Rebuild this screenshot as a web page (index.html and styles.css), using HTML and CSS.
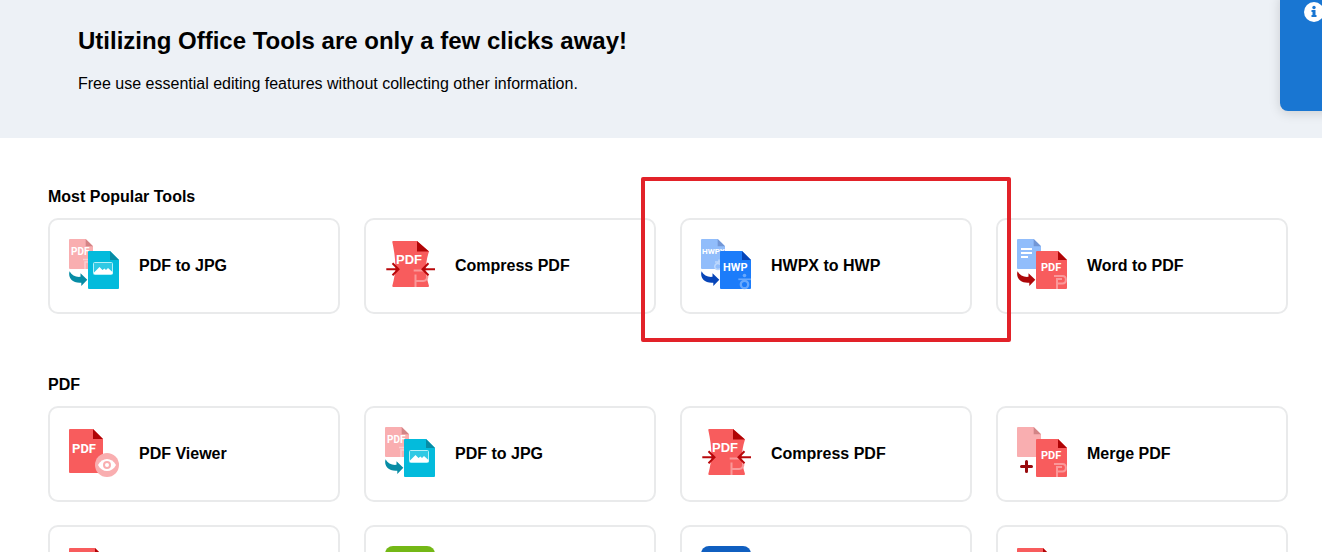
FILE: index.html
```html
<!DOCTYPE html>
<html lang="en">
<head>
  <meta charset="UTF-8" />
  <meta name="viewport" content="width=device-width, initial-scale=1" />
  <link rel="stylesheet" href="styles.css">
</head>
<body>
  <!-- shared icon parts -->
  <svg class="sprite" aria-hidden="true">
    <symbol id="back-doc" viewBox="0 0 56 56">
      <path d="M4 1h15.700l7.300 7.300V31H4a1 1 0 0 1-1-1V2a1 1 0 0 1 1-1z" />
    </symbol>
    <symbol id="front-doc" viewBox="0 0 56 56">
      <path d="M23 13h21l9 9v28a1 1 0 0 1-1 1H23a1 1 0 0 1-1-1V14a1 1 0 0 1 1-1z" />
    </symbol>
    <symbol id="arrow" viewBox="0 0 56 56">
      <path d="M3.500 33.300c2.500 4 6 6 11 5.500V35.300L21.300 41.800 15.300 48v-3.300C8 45.500 1.500 41 3.500 33.300z" />
    </symbol>
    <symbol id="jpg-front" viewBox="0 0 56 56">
      <use href="#front-doc" fill="#03bbdc" />
      <path d="M44 13v9h9z" fill="#078ca5" />
      <rect x="27.500" y="24.500" width="19" height="12" rx="1" fill="#2fc9e4" stroke="#b5f0f8" />
      <path d="M28 34.500l5.500-5.500 3 3 2-1.500 1.500 1.500 2-2 4.500 4V36H28z" fill="#fff" />
      <use href="#arrow" fill="#078ca5" />
    </symbol>
    <symbol id="compress-doc" viewBox="0 0 56 56">
      <path d="M11 3h24l12 10.500c-4 12-4 22 0 34.500a1 1 0 0 1-1 1H11.300a1 1 0 0 1-1-1c4-15 4-25 0-44a1 1 0 0 1 .7-1z" fill="#f85c5d" />
      <path d="M35 3v10.500h12z" fill="#af0406" />
      <path d="M31.700 32.500H44M33.500 49V36.500M34 43h7c4 0 4.500-3 4.500-6" fill="none" stroke="#fa9899" stroke-width="2" />
      <path d="M4.300 31.300H16M10.500 25.300l6 6-6 6M53 31.300H41M46.500 25.300l-6 6 6 6" fill="none" stroke="#b8080b" stroke-width="2" />
    </symbol>
    <symbol id="pdf-front" viewBox="0 0 56 56">
      <use href="#front-doc" fill="#f85c5d" />
      <path d="M44 13v9h9z" fill="#af0406" />
      <path d="M40 38h8.500c4.500 0 4.500 7.500 0 7.500H43M43 51V41h5" fill="none" stroke="#fa9899" stroke-width="2" />
    </symbol>
    <symbol id="hwp-front" viewBox="0 0 56 56">
      <use href="#front-doc" fill="#1c7cfa" />
      <path d="M44 13v9h9z" fill="#0745b8" />
      <circle cx="46.500" cy="37.500" r="1.800" fill="#68a8fc" />
      <path d="M40.300 41.300H53" stroke="#68a8fc" stroke-width="1.700" />
      <circle cx="46.500" cy="46.500" r="3.700" fill="none" stroke="#68a8fc" stroke-width="2.300" />
      <use href="#arrow" fill="#0745b8" />
    </symbol>
    <symbol id="red-doc" viewBox="0 0 56 56">
      <path d="M4 3h25l10 10v34H4a1 1 0 0 1-1-1V4a1 1 0 0 1 1-1z" fill="#f85c5d" />
      <path d="M29 3v10h10z" fill="#af0406" />
    </symbol>
    <symbol id="tile" viewBox="0 0 56 56">
      <rect x="3" y="1" width="50" height="50" rx="8" />
    </symbol>
  </svg>

  <header class="hero">
    <h1>Utilizing Office Tools are only a few clicks away!</h1>
    <p>Free use essential editing features without collecting other information.</p>
  </header>

  <aside class="side-panel">
    <svg class="info-icon" viewBox="0 0 20 20" aria-hidden="true">
      <circle cx="10" cy="10" r="10" fill="#fff" />
      <circle cx="10" cy="5.500" r="1.700" fill="#1976d2" />
      <path d="M7.500 8h4v5h1v2h-5v-2h1v-3h-1z" fill="#1976d2" />
    </svg>
  </aside>

  <main class="tools">
    <section class="tool-section">
      <h2>Most Popular Tools</h2>
      <div class="tool-grid">
        <a class="tool-card" href="#">
          <svg class="tool-icon" viewBox="0 0 56 56">
            <use href="#back-doc" fill="#f9aeb0" />
            <path d="M19.700 1v7.300H27z" fill="#d38486" />
            <text class="glyph" x="5" y="17" font-size="10">PDF</text>
            <path d="M17 21.500h6M19 31v-7h4" fill="none" stroke="#fcd0d1" stroke-width="1.500" />
            <use href="#jpg-front" />
          </svg>
          <span>PDF to JPG</span>
        </a>
        <a class="tool-card" href="#">
          <svg class="tool-icon" viewBox="0 0 56 56">
            <use href="#compress-doc" />
            <text class="glyph wide" x="14" y="26" font-size="13">PDF</text>
          </svg>
          <span>Compress PDF</span>
        </a>
        <a class="tool-card highlighted" href="#">
          <svg class="tool-icon" viewBox="0 0 56 56">
            <use href="#back-doc" fill="#91bdfb" />
            <path d="M19.700 1v7.300H27z" fill="#7297d6" />
            <text class="glyph" x="4" y="16" font-size="8">HWPX</text>
            <path d="M17 24h6M21 21.500v2M22 26.500a3 3 0 1 0 0 4" fill="none" stroke="#bdd8fd" stroke-width="1.500" />
            <use href="#hwp-front" />
            <text class="glyph" x="25" y="33" font-size="11">HWP</text>
          </svg>
          <span>HWPX to HWP</span>
        </a>
        <a class="tool-card" href="#">
          <svg class="tool-icon" viewBox="0 0 56 56">
            <use href="#back-doc" fill="#91bdfb" />
            <path d="M19.700 1v7.300H27z" fill="#7297d6" />
            <path d="M7 11h11M7 15h11M7 19h7" stroke="#fff" stroke-width="2" />
            <use href="#pdf-front" />
            <use href="#arrow" fill="#ad0709" />
            <text class="glyph" x="27" y="33" font-size="11">PDF</text>
          </svg>
          <span>Word to PDF</span>
        </a>
      </div>
    </section>

    <section class="tool-section">
      <h2>PDF</h2>
      <div class="tool-grid">
        <a class="tool-card" href="#">
          <svg class="tool-icon" viewBox="0 0 56 56">
            <path d="M4 3h23l10 10v34H4a1 1 0 0 1-1-1V4a1 1 0 0 1 1-1z" fill="#f85c5d" />
            <path d="M27 3v10h10z" fill="#af0406" />
            <text class="glyph" x="6" y="27" font-size="13">PDF</text>
            <circle cx="41" cy="39" r="12" fill="#f9aeb0" />
            <path d="M32 39c4-8 14-8 18 0-4 8-14 8-18 0z" fill="#fff" />
            <circle cx="41" cy="39" r="3" fill="none" stroke="#f9aeb0" stroke-width="2" />
          </svg>
          <span>PDF Viewer</span>
        </a>
        <a class="tool-card" href="#">
          <svg class="tool-icon" viewBox="0 0 56 56">
            <use href="#back-doc" fill="#f9aeb0" />
            <path d="M19.700 1v7.300H27z" fill="#d38486" />
            <text class="glyph" x="5" y="17" font-size="10">PDF</text>
            <path d="M17 21.500h6M19 31v-7h4" fill="none" stroke="#fcd0d1" stroke-width="1.500" />
            <use href="#jpg-front" />
          </svg>
          <span>PDF to JPG</span>
        </a>
        <a class="tool-card" href="#">
          <svg class="tool-icon" viewBox="0 0 56 56">
            <use href="#compress-doc" />
            <text class="glyph wide" x="14" y="26" font-size="13">PDF</text>
          </svg>
          <span>Compress PDF</span>
        </a>
        <a class="tool-card" href="#">
          <svg class="tool-icon" viewBox="0 0 56 56">
            <use href="#back-doc" fill="#f9aeb0" />
            <path d="M19.700 1v7.300H27z" fill="#d38486" />
            <use href="#pdf-front" />
            <path d="M12.500 35.500v10M7.500 40.500h10" stroke="#980a0d" stroke-width="3" stroke-linecap="round" />
            <text class="glyph" x="27" y="33" font-size="11">PDF</text>
          </svg>
          <span>Merge PDF</span>
        </a>
        <a class="tool-card" href="#"><svg class="tool-icon"><use href="#red-doc" /></svg></a>
        <a class="tool-card" href="#"><svg class="tool-icon"><use href="#tile" fill="#74b816" /></svg></a>
        <a class="tool-card" href="#"><svg class="tool-icon"><use href="#tile" fill="#105fc0" /></svg></a>
        <a class="tool-card" href="#"><svg class="tool-icon"><use href="#red-doc" /></svg></a>
      </div>
    </section>
  </main>
</body>
</html>
```

FILE: styles.css
```css
* {
  box-sizing: border-box;
}
body {
  margin: 0;
  height: 100vh;
  overflow: hidden;
  position: relative;
  background: #fff;
  color: #000;
  font-family: "Liberation Sans", Arial, sans-serif;
  font-size: 16px;
  line-height: 24px;
}
h1, h2, p {
  margin: 0;
}
.sprite {
  position: absolute;
  width: 0;
  height: 0;
}
.hero {
  background: #edf1f6;
  padding: 25px 78px 42px;
}
.hero h1 {
  font-size: 24px;
  line-height: 32px;
  margin-bottom: 15px;
}
.side-panel {
  position: absolute;
  top: -8px;
  right: -18px;
  width: 60px;
  height: 119px;
  padding: 10px 0 0 24px;
  background: #1976d2;
  border-radius: 8px;
  box-shadow: 0 2px 12px rgba(0, 0, 0, 0.15);
}
.info-icon {
  display: block;
  width: 20px;
  height: 20px;
}
.tools {
  padding: 47px 34px 0 48px;
}
.tool-section {
  margin-bottom: 59px;
}
.tool-section h2 {
  font-size: 16px;
  line-height: 24px;
  margin-bottom: 9px;
}
.tool-grid {
  display: grid;
  grid-template-columns: repeat(4, 1fr);
  gap: 23px 24px;
}
.tool-card {
  position: relative;
  display: flex;
  align-items: center;
  gap: 17px;
  min-height: 96px;
  padding: 0 16px;
  border: 2px solid #e9eaeb;
  border-radius: 10px;
  color: #000;
  font-weight: bold;
  text-decoration: none;
}
.tool-icon {
  flex: none;
  width: 56px;
  height: 56px;
}
.glyph {
  fill: #fff;
  font-family: Roboto, sans-serif;
  font-weight: bold;
}
.glyph.wide {
  font-family: "Liberation Sans", Arial, sans-serif;
}
/* red frame drawn around the featured card */
.highlighted::after {
  content: "";
  position: absolute;
  z-index: 2;
  top: -43px;
  right: -41px;
  bottom: -30px;
  left: -41px;
  border: 4px solid #e22229;
  border-radius: 2px;
}
```
